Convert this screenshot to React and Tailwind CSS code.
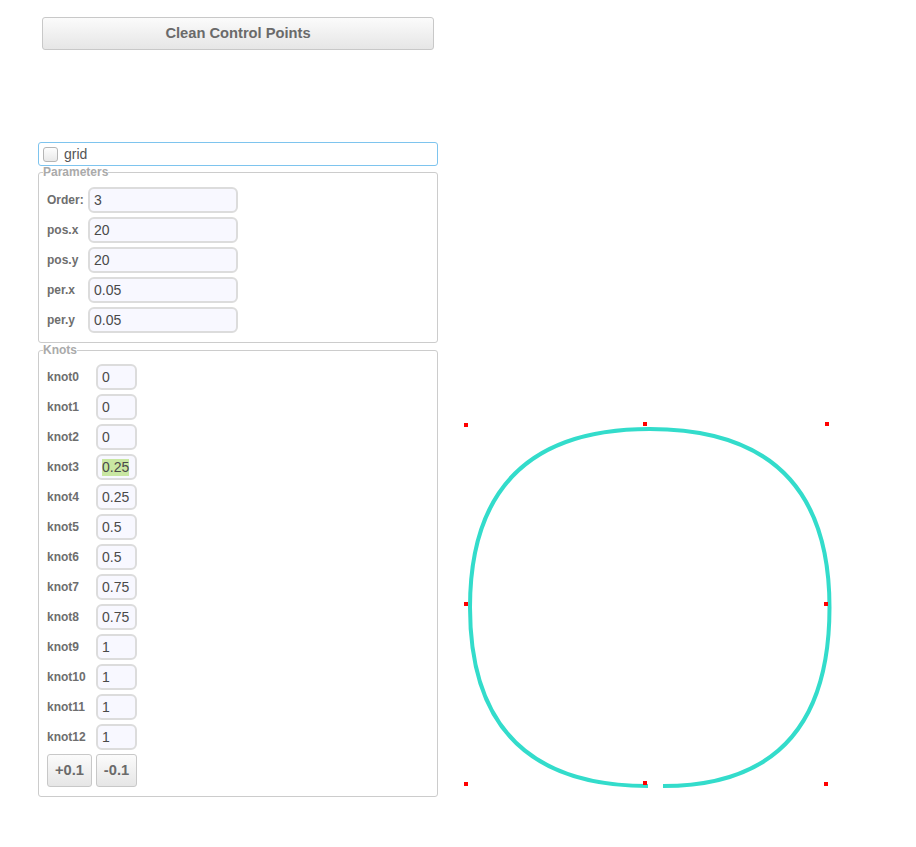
import React from "react";

const params = [
  ["Order:", "3"],
  ["pos.x", "20"],
  ["pos.y", "20"],
  ["per.x", "0.05"],
  ["per.y", "0.05"],
];
const knots = ["0", "0", "0", "0.25", "0.25", "0.5", "0.5", "0.75", "0.75", "1", "1", "1", "1"];

const dots = [
  [466, 425], [645, 424], [827, 424],
  [466, 604], [826, 604],
  [466, 784], [645, 783], [826, 784],
];

function Field({ value, w, highlight }) {
  return (
    <div
      className={`${w} h-[26px] flex items-center pl-[4px] border-2 border-[#dcdcdc] rounded-[6px] bg-[#f8f8ff] text-[14px] text-[#4a4a4a]`}
    >
      {highlight ? <span className="bg-[#c9e7a2] leading-[17px]">{value}</span> : value}
    </div>
  );
}

function GrayButton({ children, className }) {
  return (
    <div
      className={`flex items-center justify-center border border-[#c8c8c8] rounded-[3px] bg-gradient-to-b from-[#fbfbfb] to-[#e6e6e6] font-bold text-[14.7px] text-[#6a6a6a] ${className}`}
    >
      {children}
    </div>
  );
}

export default function App() {
  return (
    <div className="flex bg-white min-h-[847px] font-['Liberation_Sans',Arial,sans-serif]">
      <div className="w-[445px] shrink-0 pl-[38px] pr-[7px] pt-[17px]">
        <div className="pl-[4px] pr-[4px]">
          <GrayButton className="h-[33px] w-full">Clean Control Points</GrayButton>
        </div>
        <div className="h-[92px]" />
        <div className="h-[24px] flex items-center border border-[#7ec4ee] rounded-[3px] pl-[4px]">
          <div className="w-[15px] h-[15px] rounded-[3px] border border-[#b5b5b5] bg-gradient-to-b from-[#fdfdfd] to-[#e9e9e9]" />
          <span className="ml-[6px] text-[14px] text-[#555]">grid</span>
        </div>
        <fieldset className="border border-[#cccccc] rounded-[3px] pl-[8px] pt-[6px] pb-[7px]">
          <legend className="text-[12px] leading-[13px] font-bold text-[#aaaaaa] -ml-[4px]">Parameters</legend>
          {params.map(([l, v]) => (
            <div key={l} className="h-[30px] flex items-center">
              <div className="w-[41px] text-[12px] font-bold text-[#6e6e6e]">{l}</div>
              <Field value={v} w="w-[150px]" />
            </div>
          ))}
        </fieldset>
        <fieldset className="mt-[1px] border border-[#cccccc] rounded-[3px] pl-[8px] pt-[5px] pb-[9px]">
          <legend className="text-[12px] leading-[13px] font-bold text-[#aaaaaa] -ml-[4px]">Knots</legend>
          {knots.map((v, i) => (
            <div key={i} className="h-[30px] flex items-center">
              <div className="w-[49px] text-[12px] font-bold text-[#6e6e6e]">knot{i}</div>
              <Field value={v} w="w-[41px]" highlight={i === 3} />
            </div>
          ))}
          <div className="flex gap-[4px] mt-[2px]">
            <GrayButton className="w-[45px] h-[33px]">+0.1</GrayButton>
            <GrayButton className="w-[41px] h-[33px]">-0.1</GrayButton>
          </div>
        </fieldset>
      </div>
      <svg width="471" height="847" viewBox="445 0 471 847" className="shrink-0">
        <path
          d="M663 786 Q829.5 786 829.5 607.5 Q829.5 429 649.75 429 Q470 429 470 607.5 Q470 786 648 786"
          fill="none"
          stroke="#33dccb"
          strokeWidth="4"
        />
        {dots.map(([x, y], i) => (
          <rect key={i} x={x - 2} y={y - 2} width="4" height="4" fill="#ff0000" />
        ))}
      </svg>
    </div>
  );
}
